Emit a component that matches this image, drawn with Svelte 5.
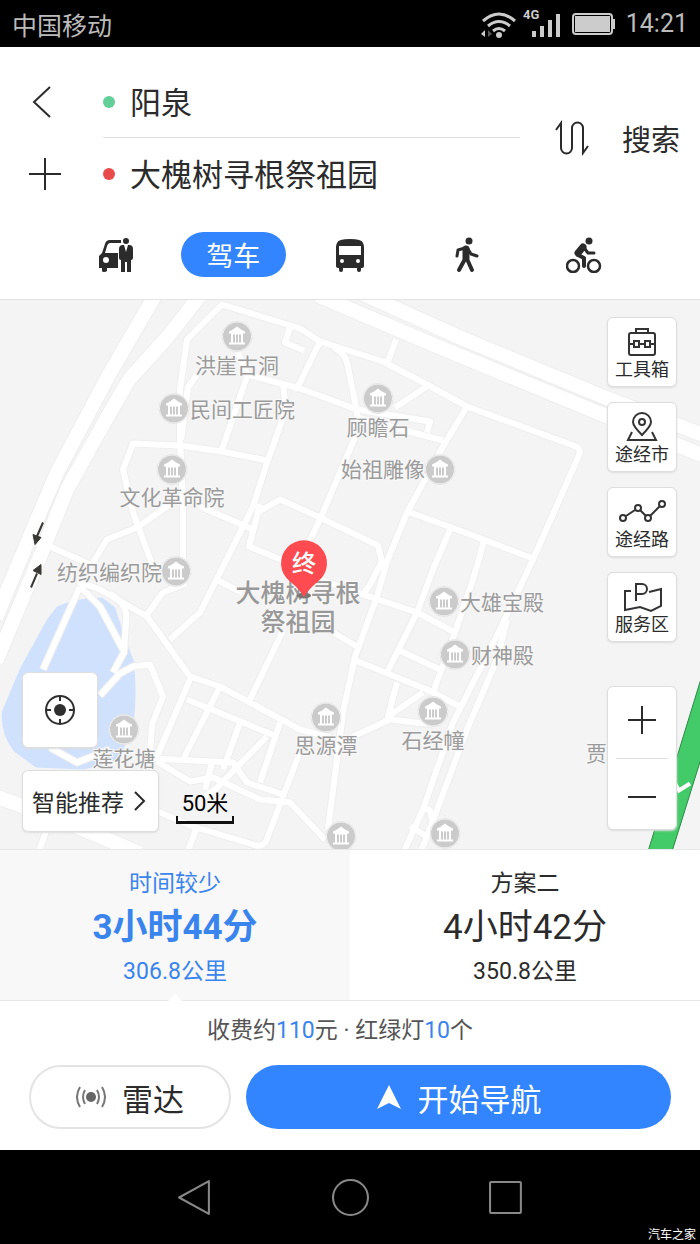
<script lang="ts">
  let start = $state('阳泉');
  let end = $state('大槐树寻根祭祖园');
  let mode = $state('drive');
  let plan = $state(0);

  const modes = [
    { id: 'taxi', name: '打车' },
    { id: 'drive', name: '驾车' },
    { id: 'bus', name: '公交' },
    { id: 'walk', name: '步行' },
    { id: 'bike', name: '骑行' },
  ];

  const tools = [
    { id: 'toolbox', name: '工具箱' },
    { id: 'city', name: '途经市' },
    { id: 'road', name: '途经路' },
    { id: 'service', name: '服务区' },
  ];

  const plans = [
    { name: '时间较少', time: '3小时44分', distance: '306.8公里' },
    { name: '方案二', time: '4小时42分', distance: '350.8公里' },
  ];

  // x/y is the centre of the marker, tx/ty the anchor of the label
  const places = [
    { name: '洪崖古洞', x: 237, y: 37, tx: 237, ty: 73, anchor: 'middle' },
    { name: '民间工匠院', x: 174, y: 109, tx: 190, ty: 117, anchor: 'start' },
    { name: '顾瞻石', x: 378, y: 99, tx: 378, ty: 135, anchor: 'middle' },
    { name: '始祖雕像', x: 440, y: 170, tx: 425, ty: 177, anchor: 'end' },
    { name: '文化革命院', x: 172, y: 170, tx: 172, ty: 205, anchor: 'middle' },
    { name: '纺织编织院', x: 176, y: 272, tx: 162, ty: 280, anchor: 'end' },
    { name: '大雄宝殿', x: 444, y: 302, tx: 460, ty: 310, anchor: 'start' },
    { name: '财神殿', x: 455, y: 355, tx: 471, ty: 363, anchor: 'start' },
    { name: '思源潭', x: 326, y: 418, tx: 326, ty: 453, anchor: 'middle' },
    { name: '石经幢', x: 433, y: 412, tx: 433, ty: 448, anchor: 'middle' },
    { name: '莲花塘', x: 124, y: 430, tx: 124, ty: 466, anchor: 'middle' },
    { name: '', x: 341, y: 537, tx: 0, ty: 0, anchor: 'middle' },
    { name: '', x: 445, y: 534, tx: 0, ty: 0, anchor: 'middle' },
  ];

  const highways = [
    'M155 -4 108 77 57 173 40 213 16 270 -4 318',
    'M200 -4 168 37 129 80 102 127 67 190 38 262 -4 362',
    'M318 -4 433 45 600 114 710 159',
    'M360 -7 460 38 600 96 710 138',
    'M-4 497 60 520 140 554',
  ];

  const paths = [
    'M183 260 183 200 180 140 180 90 187 40 222 5 300 29 320 42 383 62 427 85 467 107 576 147Q582 150 578 158L533 260 500 330 453 423 423 510 403 554',
    'M290 28 285 43 304 51',
    'M320 42 300 83 294 91',
    'M334 48Q345 54 347 63L357 112 357 133 320 220 308 245',
    'M396 40 388 62',
    'M197 75 188 88 181 140',
    'M236 48 247 75 300 89 357 110 430 122 427 133',
    'M357 118 443 141',
    'M395 108 427 87',
    'M467 107 443 147 407 213 387 262 377 297 355 357 343 413 328 530',
    'M247 77 222 150',
    'M283 84 286 110 267 163 253 207 218 277 200 313 170 340',
    'M180 146 133 144 123 170 133 213 153 267',
    'M180 146 222 152 267 161',
    'M200 207 253 230',
    'M170 205 137 228 107 240 93 263',
    'M50 247 90 265',
    'M257 213 280 200 320 218 378 246 382 262 370 285 363 295',
    'M260 205 249 247 283 261',
    'M410 213 457 230 533 259',
    'M450 230 433 270 417 313 387 373',
    'M485 238 473 280 455 333 433 393',
    'M320 280 363 295 417 313 455 333',
    'M330 331 357 347',
    'M353 360 427 390 460 407',
    'M397 350 440 370',
    'M397 383 388 417 423 393',
    'M353 437 390 420 433 425',
    'M507 320 497 360 467 430 427 537 420 554',
    'M423 508 430 511 433 523',
    'M410 527 427 537',
    'M80 287 43 370',
    'M80 287 100 307 123 350',
    'M78 282 100 290 147 317 190 377 220 387 300 430 330 438',
    'M110 294Q129 306 126 322L124 353 113 373',
    'M100 396 120 374 133 367 150 365 163 397 152 425 150 454',
    'M147 315 163 293 186 284',
    'M218 281 242 293',
    'M190 380 157 457',
    'M220 387 183 460',
    'M283 331 250 400',
    'M187 400 277 437',
    'M240 423 223 470',
    'M280 423 260 483',
    'M267 437 215 490 203 498',
    'M152 459 233 463 247 483 283 495',
    'M157 462 190 482 213 478 260 500 290 503 325 540',
    'M212 463 205 490',
    'M304 442 283 497 266 542Q263 547 256 546L193 527 158 512',
    'M197 527 187 554',
    'M46 532 38 554',
    'M50 448 77 463 110 450',
  ];
</script>

{#snippet modeIcon(id)}
  <svg class="mode-icon" viewBox="0 0 36 36" aria-hidden="true">
    {#if id === 'taxi'}
      <path fill-rule="evenodd" d="M1 19 4 16 7 7Q8 3 12 3H23V6H12Q10 6 9 9L7 16H20V31H9V34Q8 35 6 35T4 34V31H1ZM8 20A3 3 0 1 0 8 26 3 3 0 1 0 8 20Z" />
      <circle cx="28" cy="4" r="3" />
      <path d="M21 12Q21 8 25 8H26L28 15 30 8H31Q35 8 35 12V21Q35 23 33 23V35H29V25H27V35H23V23Q21 23 21 21Z" />
    {:else if id === 'bus'}
      <path fill-rule="evenodd" d="M5 6Q6 2 18 2T31 6Q32 8 32 10V29Q32 31 29 31V33Q29 35 27 35T25 33V31H11V33Q11 35 9 35T7 33V31Q4 31 4 29V10Q4 8 5 6ZM7 9V18H29V9ZM10 22A2 2 0 1 0 10 26 2 2 0 1 0 10 22ZM26 22A2 2 0 1 0 26 26 2 2 0 1 0 26 22Z" />
    {:else if id === 'walk'}
      <circle cx="20" cy="4" r="3.5" />
      <g fill="none" stroke="#2b2b2b" stroke-linecap="round" stroke-linejoin="round">
        <path d="M16 11 9 13 8 19M19 12 22 17 28 19" stroke-width="3" />
        <path d="M17 12V21" stroke-width="7" />
        <path d="M16 22 10 33M18 22 23 33" stroke-width="4" />
      </g>
    {:else}
      <g fill="none" stroke="#2b2b2b" stroke-linecap="round" stroke-linejoin="round">
        <circle cx="7" cy="29" r="6" stroke-width="2.5" />
        <circle cx="28" cy="29" r="6" stroke-width="2.5" />
        <path d="M19 12 22 16H28" stroke-width="3" />
        <path d="M17 10 12 16" stroke-width="7" />
        <path d="M12 18 18 21V29" stroke-width="4" />
      </g>
      <circle cx="23" cy="4" r="3.5" />
    {/if}
  </svg>
{/snippet}

{#snippet toolIcon(id)}
  <svg class="tool-icon" viewBox="0 0 48 32" aria-hidden="true">
    {#if id === 'toolbox'}
      <rect x="11" y="7" width="26" height="22" rx="2" />
      <path d="M18 7V3H30V7M11 18H16M21 18H27M32 18H37" />
      <rect x="16" y="15" width="5" height="6" /><rect x="27" y="15" width="5" height="6" />
    {:else if id === 'city'}
      <path d="M24 24Q15 15 15 11A9 9 0 0 1 33 11Q33 15 24 24ZM14 21 10 29H38L34 21" />
      <circle cx="24" cy="11" r="3" />
    {:else if id === 'road'}
      <circle cx="5" cy="22" r="3" /><circle cx="20" cy="12" r="3" />
      <circle cx="30" cy="22" r="3" /><circle cx="44" cy="8" r="3" />
      <path d="M8 20 17 14M22 14 28 20M32 20 42 10" />
    {:else}
      <path d="M13 10H7V29L22 26 33 30 43 25V8L31 11" />
      <path d="M18 20V3H24A5 5 0 0 1 24 13H18" />
    {/if}
  </svg>
{/snippet}

<div class="screen">
  <div class="status">
    <span>中国移动</span>
    <div class="status-right">
      <svg width="82" height="34" viewBox="0 0 82 34" aria-hidden="true">
        <g fill="none" stroke="#ccc" stroke-width="3">
          <path d="M3 14Q19 0 35 14M8 19Q19 10 30 19M13 24Q19 19 25 24" />
        </g>
        <circle cx="19" cy="28" r="3" fill="#ccc" />
        <path d="M5 23V30L1 27Z" fill="#ccc" />
        <path d="M8 23V30L12 27Z" fill="#555" />
        <g fill="#ccc">
          <rect x="52" y="24" width="4" height="6" />
          <rect x="60" y="19" width="4" height="11" />
          <rect x="68" y="13" width="4" height="17" />
          <rect x="76" y="7" width="4" height="23" />
        </g>
        <text x="43" y="12" class="net">4G</text>
      </svg>
      <svg width="44" height="22" viewBox="0 0 44 22" aria-hidden="true">
        <rect x="1" y="1" width="39" height="20" rx="3" fill="none" stroke="#ccc" stroke-width="2" />
        <rect x="3" y="3" width="35" height="16" fill="#ccc" />
        <path d="M41 6H43V16H41Z" fill="#ccc" />
      </svg>
      <span>14:21</span>
    </div>
  </div>

  <header>
    <form class="search" onsubmit={(e) => e.preventDefault()}>
      <div class="side">
        <button type="button" aria-label="返回">
          <svg width="32" height="32" viewBox="0 0 32 32"><path d="M21 1 5 16 21 31" /></svg>
        </button>
        <button type="button" aria-label="添加途经点">
          <svg width="32" height="32" viewBox="0 0 32 32"><path d="M0 16H32M16 0V32" /></svg>
        </button>
      </div>
      <div class="fields">
        <label><i class="dot green"></i><input aria-label="起点" bind:value={start} /></label>
        <label><i class="dot red"></i><input aria-label="终点" bind:value={end} /></label>
      </div>
      <button type="button" class="swap" aria-label="交换起终点" onclick={() => ([start, end] = [end, start])}>
        <svg width="34" height="36" viewBox="0 0 34 36">
          <path d="M1 10 6 3V28A5 5 0 0 0 17 28V8A5 5 0 0 1 28 8V33L33 26" />
        </svg>
      </button>
      <button class="go">搜索</button>
    </form>

    <nav class="modes">
      {#each modes as m}
        <button class:active={mode === m.id} aria-label={m.name} onclick={() => (mode = m.id)}>
          {#if m.id === 'drive'}{m.name}{:else}{@render modeIcon(m.id)}{/if}
        </button>
      {/each}
    </nav>
  </header>

  <main class="map">
    <svg class="canvas" viewBox="0 0 700 550" preserveAspectRatio="xMidYMid slice">
      <defs>
        <g id="place">
          <circle r="15" fill="#fff" stroke="#e4e4e4" />
          <circle r="14" fill="#cbcbcb" />
          <path fill="#fff" d="M-8 -3V-5L-4 -7 0 -10 4 -7 8 -5V-3H6V6H8V8H-8V6H-6V-3ZM-4 -2V6H-2V-2ZM-1 -2V6H1V-2ZM2 -2V6H4V-2Z" fill-rule="evenodd" />
        </g>
      </defs>
      <path class="pond" d="M57 307Q78 298 102 298L115 308 126 341 134 362Q137 395 134 420L120 460 84 470 36 468 14 452Q0 434 2 412L20 369 47 320Z" />
      <g class="roads outline">{#each paths as d}<path {d} />{/each}</g>
      <g class="highways outline">{#each highways as d}<path {d} />{/each}</g>
      <g class="roads">{#each paths as d}<path {d} />{/each}</g>
      <g class="highways">{#each highways as d}<path {d} />{/each}</g>
      <path d="M702 376 648 552H672L702 456Z" fill="#43cb69" stroke="#2c8a48" />
      <path d="M675 484 679 491 690 484" fill="none" stroke="#fff" stroke-width="4" />
      <g fill="#3a3936" stroke="#3a3936">
        <path d="M43 223 36 239" stroke-width="2" /><path d="M33 235 41 238 35 245Z" />
        <path d="M31 288 37 274" stroke-width="2" /><path d="M33 271 41 265 41 275Z" />
      </g>

      {#each places as p}
        <use href="#place" x={p.x} y={p.y} />
        <text x={p.tx} y={p.ty} text-anchor={p.anchor}>{p.name}</text>
      {/each}
      <text x="586" y="461">贾</text>
      <g class="target">
        <text x="298" y="302" text-anchor="middle">大槐树寻根</text>
        <text x="298" y="331" text-anchor="middle">祭祖园</text>
      </g>
      <ellipse cx="304" cy="296" rx="7" ry="3" fill="#777" />
      <path d="M304 298Q300 290 290 282A23 23 0 1 1 318 282Q308 290 304 298Z" fill="#fd4b51" />
      <text x="304" y="272" text-anchor="middle" class="end-mark">终</text>
    </svg>

    <div class="left-tools">
      <button class="card locate" aria-label="定位">
        <svg width="32" height="32" viewBox="0 0 32 32">
          <circle cx="16" cy="16" r="14" fill="none" stroke="#2f2f2f" stroke-width="2" />
          <circle cx="16" cy="16" r="6" fill="#2f2f2f" />
          <path d="M16 2V7M16 25V30M2 16H7M25 16H30" stroke="#2f2f2f" stroke-width="2" />
        </svg>
      </button>
      <div class="bottom-tools">
        <button class="card recommend">
          智能推荐
          <svg width="12" height="20" viewBox="0 0 12 20"><path d="M1 1 10 10 1 19" /></svg>
        </button>
        <div class="scale">50米</div>
      </div>
    </div>

    <div class="right-tools">
      <div class="tool-list">
        {#each tools as t}
          <button class="card tool">{@render toolIcon(t.id)}<span>{t.name}</span></button>
        {/each}
      </div>
      <div class="card zoom">
        <button aria-label="放大"><svg width="28" height="28" viewBox="0 0 28 28"><path d="M0 14H28M14 0V28" /></svg></button>
        <button aria-label="缩小"><svg width="28" height="28" viewBox="0 0 28 28"><path d="M0 14H28" /></svg></button>
      </div>
    </div>
  </main>

  <section class="plans">
    {#each plans as p, i}
      <button class:active={plan === i} onclick={() => (plan = i)}>
        <span class="name">{p.name}</span>
        <span class="time">{p.time}</span>
        <span class="distance">{p.distance}</span>
      </button>
    {/each}
  </section>

  <footer>
    <p>收费约<b>110</b>元 · 红绿灯<b>10</b>个</p>
    <div class="actions">
      <button class="radar">
        <svg width="30" height="24" viewBox="0 0 30 24" aria-hidden="true">
          <circle cx="15" cy="12" r="5" fill="#666" />
          <path d="M9 5Q5 12 9 19M4 2Q-2 12 4 22M21 5Q25 12 21 19M26 2Q32 12 26 22" fill="none" stroke="#777" stroke-width="2" />
        </svg>
        雷达
      </button>
      <button class="navigate">
        <svg width="26" height="24" viewBox="0 0 26 24" aria-hidden="true"><path d="M13 0 25 24 13 18 1 24Z" fill="#fff" /></svg>
        开始导航
      </button>
    </div>
  </footer>

  <div class="system">
    <button aria-label="返回"><svg viewBox="0 0 36 36"><path d="M32 2V34L3 18Z" /></svg></button>
    <button aria-label="主页"><svg viewBox="0 0 36 36"><circle cx="18" cy="18" r="17" /></svg></button>
    <button aria-label="最近任务"><svg viewBox="0 0 36 36"><rect x="2" y="3" width="30" height="30" rx="1" /></svg></button>
    <span class="mark">汽车之家</span>
  </div>
</div>

<style>
  :global(body) {
    margin: 0;
    background: #fff;
  }

  .screen {
    display: flex;
    flex-direction: column;
    min-height: 100vh;
    font-family: Roboto, "Noto Sans CJK SC", sans-serif;
    color: #2b2b2b;
  }

  button {
    border: none;
    background: none;
    padding: 0;
    font: inherit;
    color: inherit;
    cursor: pointer;
  }

  svg {
    display: block;
  }

  .status {
    display: flex;
    justify-content: space-between;
    align-items: center;
    height: 47px;
    padding: 0 12px;
    background: #000;
    color: #bbb;
    font-size: 25px;
  }

  .status-right {
    display: flex;
    align-items: center;
    gap: 10px;
  }

  .net {
    fill: #ccc;
    font-size: 13px;
    font-weight: 700;
  }

  header {
    padding: 19px 0 22px;
    border-bottom: 1px solid #e2e2e2;
  }

  .search {
    display: flex;
    align-items: center;
    padding: 0 20px 0 29px;
  }

  .side {
    display: flex;
    flex-direction: column;
    width: 74px;
  }

  .side button {
    display: flex;
    align-items: center;
    height: 72px;
  }

  .side path,
  .swap path,
  .zoom path,
  .recommend path {
    fill: none;
    stroke: #2b2b2b;
    stroke-width: 2;
  }

  .fields {
    flex: 1;
    min-width: 0;
  }

  .fields label {
    display: flex;
    align-items: center;
    gap: 15px;
    height: 72px;
    box-sizing: border-box;
  }

  .fields label:first-child {
    border-bottom: 1px solid #ddd;
  }

  .fields input {
    flex: 1;
    min-width: 0;
    padding: 0 0 3px;
    border: none;
    outline: none;
    background: none;
    font: inherit;
    font-size: 31px;
    color: inherit;
  }

  .dot {
    width: 12px;
    height: 12px;
    border-radius: 50%;
  }

  .green {
    background: #63cf98;
  }

  .red {
    background: #e94b4b;
  }

  .swap {
    margin: 0 33px 0 35px;
  }

  .go {
    font-size: 29px;
  }

  .modes {
    display: grid;
    grid-template-columns: repeat(5, 1fr);
    justify-items: center;
    padding: 22px 58px 0;
  }

  .modes button {
    display: flex;
    align-items: center;
    justify-content: center;
    width: 105px;
    height: 45px;
    border-radius: 23px;
    font-size: 27px;
  }

  .modes .active {
    background: #3385ff;
    color: #fff;
  }

  .mode-icon {
    width: 36px;
    height: 36px;
    fill: #2b2b2b;
  }

  .map {
    position: relative;
    flex: 1;
    min-height: 540px;
    background: #f4f4f4;
  }

  .canvas {
    position: absolute;
    inset: 0;
    width: 100%;
    height: 100%;
  }

  .canvas text {
    fill: #9b9b9b;
    font-size: 21px;
    paint-order: stroke;
    stroke: #f8f8f8;
    stroke-width: 2;
  }

  .canvas .target text {
    fill: #999;
    font-size: 25px;
    font-weight: 500;
  }

  .canvas .end-mark {
    fill: #fff;
    stroke: none;
    font-size: 24px;
    font-weight: 500;
  }

  .pond {
    fill: #cfe1fd;
  }

  .roads,
  .highways {
    fill: none;
    stroke: #fff;
    stroke-width: 6;
    stroke-linejoin: round;
  }

  .highways {
    stroke-width: 14;
  }

  .roads.outline {
    stroke: #eee;
    stroke-width: 8;
  }

  .highways.outline {
    stroke: #eee;
    stroke-width: 16;
  }

  .card {
    border: 1px solid #dedede;
    border-radius: 6px;
    background: #fff;
    box-shadow: 0 1px 2px #ddd;
    box-sizing: border-box;
  }

  .left-tools {
    position: absolute;
    left: 22px;
    bottom: 17px;
    display: flex;
    flex-direction: column;
    gap: 22px;
  }

  .locate {
    display: flex;
    align-items: center;
    justify-content: center;
    width: 76px;
    height: 76px;
  }

  .bottom-tools {
    display: flex;
    align-items: flex-end;
    gap: 17px;
  }

  .recommend {
    display: flex;
    align-items: center;
    gap: 10px;
    height: 62px;
    padding: 0 12px 0 9px;
    font-size: 23px;
  }

  .scale {
    width: 54px;
    height: 30px;
    margin-bottom: 8px;
    border: solid #111;
    border-width: 0 2px 3px;
    border-image: linear-gradient(transparent 80%, #111 80%) 1;
    color: #000;
    font-size: 22px;
    line-height: 26px;
    text-align: center;
  }

  .right-tools {
    position: absolute;
    top: 17px;
    right: 23px;
    bottom: 19px;
    display: flex;
    flex-direction: column;
    justify-content: space-between;
  }

  .tool-list {
    display: flex;
    flex-direction: column;
    gap: 15px;
  }

  .tool {
    display: flex;
    flex-direction: column;
    align-items: center;
    justify-content: center;
    width: 70px;
    height: 70px;
    padding-top: 3px;
    font-size: 18px;
    line-height: 24px;
  }

  .tool-icon {
    width: 48px;
    height: 32px;
    fill: none;
    stroke: #333;
    stroke-width: 2;
  }

  .zoom {
    display: flex;
    flex-direction: column;
    padding: 0 8px;
  }

  .zoom button {
    display: flex;
    align-items: center;
    justify-content: center;
    height: 71px;
    padding-bottom: 6px;
    box-sizing: border-box;
  }

  .zoom button + button {
    padding: 6px 0 0;
    border-top: 1px solid #ddd;
  }

  .plans {
    display: flex;
    border-top: 1px solid #e8e8e8;
    border-bottom: 1px solid #e8e8e8;
  }

  .plans button {
    position: relative;
    flex: 1;
    display: flex;
    flex-direction: column;
    align-items: center;
    padding: 17px 0 11px;
  }

  .plans .active {
    background: #f8f8f8;
    color: #3a84ee;
  }

  /* little notch pointing at the selected plan */
  .plans .active::after {
    content: "";
    position: absolute;
    bottom: -1px;
    border: 7px solid transparent;
    border-top: none;
    border-bottom-color: #fff;
  }

  .name,
  .distance {
    font-size: 23px;
    line-height: 34px;
  }

  .time {
    font-size: 35px;
    line-height: 54px;
  }

  .active .time {
    font-weight: 700;
  }

  footer {
    padding: 13px 29px 21px;
  }

  footer p {
    margin: 0 0 17px;
    padding-right: 20px;
    color: #555;
    font-size: 23px;
    line-height: 34px;
    text-align: center;
  }

  footer b {
    color: #3a84ee;
    font-weight: 400;
  }

  .actions {
    display: flex;
    gap: 15px;
  }

  .actions button {
    display: flex;
    align-items: center;
    justify-content: center;
    gap: 16px;
    height: 64px;
    border-radius: 32px;
    box-sizing: border-box;
    font-size: 31px;
  }

  .actions .radar {
    flex: 7;
    border: 2px solid #e4e4e4;
  }

  .actions .navigate {
    flex: 15;
    background: #3385ff;
    color: #fff;
  }

  .system {
    position: relative;
    display: flex;
    align-items: center;
    justify-content: center;
    gap: 119px;
    height: 94px;
    background: #000;
  }

  .system svg {
    width: 37px;
    height: 37px;
    fill: none;
    stroke: #888;
    stroke-width: 2;
    stroke-linejoin: round;
  }

  .mark {
    position: absolute;
    right: 4px;
    bottom: 2px;
    color: #fff;
    font-size: 12px;
  }
</style>
